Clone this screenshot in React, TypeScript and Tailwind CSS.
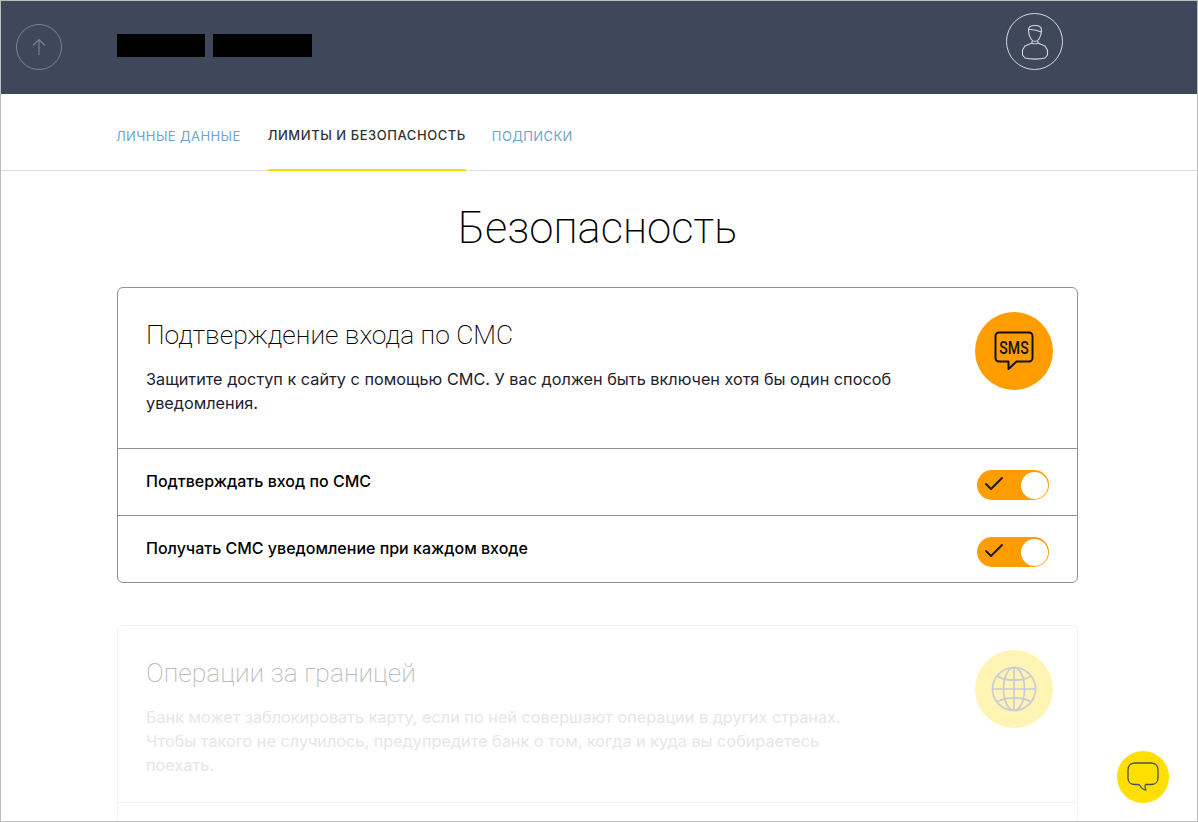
import { Check } from "lucide-react";

function Toggle() {
  return (
    <div className="flex h-[30px] w-[72px] items-center justify-between rounded-full bg-[#ff9d00] pr-[1px] pl-[5px]">
      <Check className="mt-[-3px] size-[24px] text-[#1c1c1c]" strokeWidth={2} />
      <div className="size-[27px] rounded-full bg-white" />
    </div>
  );
}

function ToggleRow({ label }: { label: string }) {
  return (
    <div className="flex h-[67px] items-start justify-between border-t border-[#8f9194] px-[28px]">
      <p className="pt-[22px] text-[16px] leading-[20px] font-medium text-black">{label}</p>
      <div className="pt-[21px]">
        <Toggle />
      </div>
    </div>
  );
}

function SmsIcon() {
  return (
    <svg width="40" height="40" viewBox="0 0 40 40" fill="none">
      <path
        d="M5 1.500h30a3.500 3.500 0 0 1 3.500 3.500v22a3.500 3.500 0 0 1-3.500 3.500H22.500L14.500 38v-7.500H5a3.500 3.500 0 0 1-3.500-3.500V5A3.500 3.500 0 0 1 5 1.500Z"
        stroke="#111"
        strokeWidth="2"
        strokeLinejoin="round"
      />
      <text
        transform="translate(20 23) scale(.74 1)"
        textAnchor="middle"
        fontFamily="Roboto, sans-serif"
        fontSize="19"
        fontWeight="500"
        fill="#111"
      >
        SMS
      </text>
    </svg>
  );
}

function GlobeIcon() {
  return (
    <svg width="46" height="46" viewBox="0 0 46 46" fill="none" stroke="#c9ccd6" strokeWidth="1.700">
      <circle cx="23" cy="23" r="21.500" />
      <ellipse cx="23" cy="23" rx="10.500" ry="21.500" />
      <path d="M23 1.500v43M1.500 23h43M6 10c4.500 3 10.500 4.200 17 4.200S35.500 13 40 10M6 36c4.500-3 10.500-4.200 17-4.200S35.500 33 40 36" />
    </svg>
  );
}

export default function App() {
  return (
    <div
      className="relative h-[822px] w-[1198px] overflow-hidden border border-[#bdbdbd] bg-white"
      style={{ fontFamily: "Inter, 'Liberation Sans', sans-serif" }}
    >
      <header className="flex h-[93px] items-center bg-[#3f485b] pr-[134px] pl-[15px]">
        <button className="mt-[-2px] flex size-[46px] items-center justify-center rounded-full border border-[#7b8290]">
          <svg width="14" height="18" viewBox="0 0 14 18" fill="none" stroke="#7b8290" strokeWidth="1.200">
            <path d="M7 17V1.500M1 7.500 7 1.500l6 6" />
          </svg>
        </button>
        <div className="mt-[-4px] ml-[55px] flex gap-[8px]">
          <div className="h-[23px] w-[88px] bg-black" />
          <div className="h-[23px] w-[99px] bg-black" />
        </div>
        <div className="mt-[-12px] ml-auto flex size-[57px] items-center justify-center rounded-full border border-[#d5d7dc]">
          <svg width="28" height="36" viewBox="0 0 28 36" fill="none" stroke="#d5d7dc" strokeWidth="1.100" strokeLinejoin="round">
            <path d="M7.500 6C7.500 3 9 1.500 14 1.500s6.500 1.500 6.500 4.500c0 3-.8 6.500-2.500 9-1.200 1.700-2.600 2.500-4 2.500s-2.800-.8-4-2.500c-1.700-2.500-2.500-6-2.500-9Z" />
            <path d="M8 5.500c3.500-.3 8 .5 12.500 2.500" />
            <path d="M11 17v2l-7 3-2.500 4v5l2.500 3c5 1.500 15 1.500 20 0l2.500-3v-5L24 22l-7-3v-2" />
            <path d="M11 19c1.500 1 4.500 1 6 0" />
          </svg>
        </div>
      </header>

      <nav className="flex h-[77px] border-b border-[#dddddd] pl-[115px] text-[13px] tracking-[0.4px]">
        <a className="flex items-center pt-[9px] text-[#6ba5cf]">ЛИЧНЫЕ ДАННЫЕ</a>
        <a className="mb-[-1px] ml-[27px] flex items-center border-b-2 border-[#ffdd00] pt-[9px] font-medium tracking-[0.55px] text-[#333333]">
          ЛИМИТЫ И БЕЗОПАСНОСТЬ
        </a>
        <a className="ml-[26px] flex items-center pt-[9px] text-[#6ba5cf]">ПОДПИСКИ</a>
      </nav>

      <main className="pr-[119px] pl-[116px]">
        <h1
          className="mt-[30px] text-center text-[43.6px] leading-[56px] font-extralight text-black"
          style={{ fontFamily: "Roboto, sans-serif" }}
        >
          Безопасность
        </h1>

        <section className="mt-[30px] overflow-hidden rounded-[6px] border border-[#8f9194]">
          <div className="flex h-[160px] justify-between pr-[24px] pl-[28px]">
            <div className="w-[780px] pt-[30px]">
              <h2
                className="text-[26.4px] leading-[34px] font-extralight text-black"
                style={{ fontFamily: "Roboto, sans-serif" }}
              >
                Подтверждение входа по СМС
              </h2>
              <p className="mt-[15px] text-[16.25px] leading-[24px] text-[#1c2130]">
                Защитите доступ к сайту с помощью СМС. У вас должен быть включен хотя бы один способ уведомления.
              </p>
            </div>
            <div className="mt-[24px] flex size-[78px] items-center justify-center rounded-full bg-[#ff9d00]">
              <SmsIcon />
            </div>
          </div>
          <ToggleRow label="Подтверждать вход по СМС" />
          <ToggleRow label="Получать СМС уведомление при каждом входе" />
        </section>

        <section className="mt-[42px] rounded-[6px] border border-[#f3f3f4]">
          <div className="flex h-[177px] justify-between border-b border-[#f3f3f4] pr-[24px] pl-[28px]">
            <div className="w-[730px] pt-[30px]">
              <h2
                className="text-[26.4px] leading-[34px] font-extralight text-[#bdbdbd]"
                style={{ fontFamily: "Roboto, sans-serif" }}
              >
                Операции за границей
              </h2>
              <p className="mt-[15px] text-[16.25px] leading-[24px] text-[#e6e6e8]">
                Банк может заблокировать карту, если по ней совершают операции в других странах. Чтобы такого не случилось, предупредите банк о том, когда и куда вы собираетесь поехать.
              </p>
            </div>
            <div className="mt-[24px] flex size-[78px] items-center justify-center rounded-full bg-[#fff4b3]">
              <GlobeIcon />
            </div>
          </div>
          <div className="h-[40px]" />
        </section>
      </main>

      <button className="absolute top-[750px] left-[1116px] flex size-[52px] items-center justify-center rounded-full bg-[#ffdf00]">
        <svg width="32" height="30" viewBox="0 0 32 30" fill="none" stroke="#4a4f5e" strokeWidth="1.300" strokeLinejoin="round">
          <path d="M8 1h16c4 0 7 2.500 7 7v8c0 4-3 6.500-7 6.500h-5c-.8 0-1 1-1 2 0 1.500.5 2.500 1 3.500-2.500 0-5-2.500-6.500-5-.5-.5-1-.5-2-.5H8c-4 0-7-2.500-7-6.500V8c0-4.500 3-7 7-7Z" />
        </svg>
      </button>
    </div>
  );
}
